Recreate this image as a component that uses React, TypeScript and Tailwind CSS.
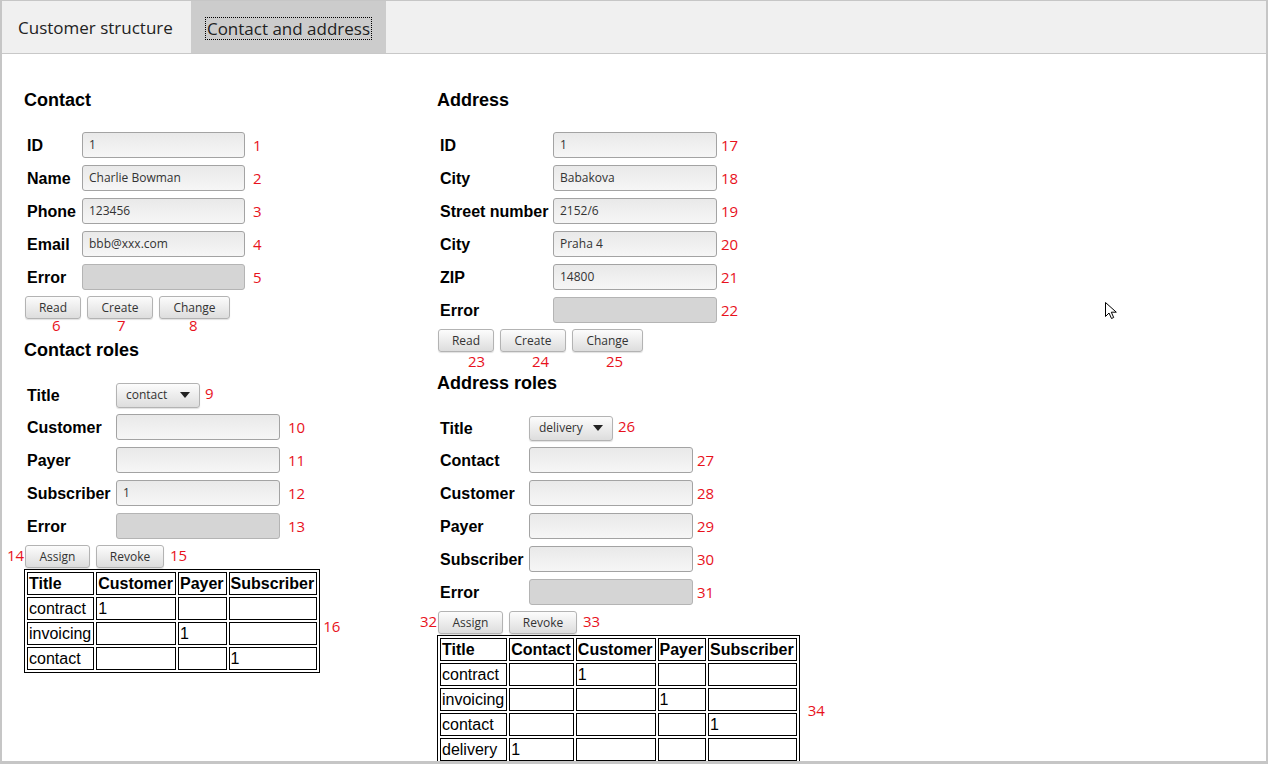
import React from 'react';

const label = "font-['Liberation_Sans',Arial,sans-serif] font-bold text-[16px] text-black";
const num = "font-['Open_Sans',sans-serif] text-[15px] leading-[16px] text-[#e8121c]";
const inputBox =
  "h-[26px] rounded-[3px] border border-[#a3a3a3] bg-linear-to-b from-[#e9e9e9] to-[#f6f6f6] pl-[6px] flex items-center font-['Open_Sans',sans-serif] text-[12px] text-[#333]";
const errorBox = 'h-[26px] rounded-[3px] border border-[#b4b4b4] bg-[#d5d5d5]';
const btn =
  "h-[23px] rounded-[3px] border border-[#b3b3b3] bg-linear-to-b from-[#fcfcfc] to-[#dddddd] shadow-[0_1px_1px_rgba(0,0,0,0.12)] font-['Open_Sans',sans-serif] text-[12px] text-[#333] flex items-center justify-center";

interface Field {
  name: string;
  value?: string;
  n: string;
  error?: boolean;
}

const FieldRow: React.FC<{ f: Field; labelW: number; inputW: number; gap: number }> = ({ f, labelW, inputW, gap }) => (
  <div className="flex items-center h-[26px]">
    <div className={`${label} pl-[3px] shrink-0 mt-[2px]`} style={{ width: labelW }}>
      {f.name}
    </div>
    <div className={f.error ? errorBox : inputBox} style={{ width: inputW }}>
      {f.value}
    </div>
    <span className={num} style={{ marginLeft: gap }}>
      {f.n}
    </span>
  </div>
);

const Select: React.FC<{ value: string; n: string; labelW: number }> = ({ value, n, labelW }) => (
  <div className="flex items-center h-[24px]">
    <div className={`${label} pl-[3px] shrink-0 mt-[2px]`} style={{ width: labelW }}>
      Title
    </div>
    <div className={`${btn} !h-[25px] w-[84px] !justify-between pl-[9px] pr-[9px]`}>
      <span>{value}</span>
      <svg width="10" height="6" viewBox="0 0 10 6">
        <path d="M0 0h10L5 6z" fill="#222" />
      </svg>
    </div>
    <span className={`${num} ml-[5px] -mt-[5px]`}>{n}</span>
  </div>
);

const ActionButtons: React.FC<{ items: [string, number, string, number][]; numTop: number }> = ({ items, numTop }) => (
  <div className="flex mt-[6px] gap-[6px] pl-[1px]">
    {items.map(([t, w, n, off]) => (
      <div key={t} className="flex flex-col items-start">
        <div className={btn} style={{ width: w }}>
          {t}
        </div>
        <span className={num} style={{ marginLeft: off, marginTop: numTop }}>
          {n}
        </span>
      </div>
    ))}
  </div>
);

const cell = "border border-black pl-[1px] pr-[2px] h-[23px] leading-[19px] text-left align-middle";

const RolesTable: React.FC<{ cols: string[]; rows: string[][] }> = ({ cols, rows }) => (
  <table className="border border-black border-separate border-spacing-[2px] font-['Liberation_Sans',Arial,sans-serif] text-[16px] text-black">
    <thead>
      <tr>
        {cols.map((c) => (
          <th key={c} className={`${cell} font-bold`}>
            {c}
          </th>
        ))}
      </tr>
    </thead>
    <tbody>
      {rows.map((r, i) => (
        <tr key={i}>
          {r.map((v, j) => (
            <td key={j} className={cell}>
              {v}
            </td>
          ))}
        </tr>
      ))}
    </tbody>
  </table>
);

const heading = "font-['Liberation_Sans',Arial,sans-serif] font-bold text-[18px] leading-[21px] text-black";

export default function App() {
  const contact: Field[] = [
    { name: 'ID', value: '1', n: '1' },
    { name: 'Name', value: 'Charlie Bowman', n: '2' },
    { name: 'Phone', value: '123456', n: '3' },
    { name: 'Email', value: 'bbb@xxx.com', n: '4' },
    { name: 'Error', n: '5', error: true },
  ];
  const contactRoles: Field[] = [
    { name: 'Customer', n: '10' },
    { name: 'Payer', n: '11' },
    { name: 'Subscriber', value: '1', n: '12' },
    { name: 'Error', n: '13', error: true },
  ];
  const address: Field[] = [
    { name: 'ID', value: '1', n: '17' },
    { name: 'City', value: 'Babakova', n: '18' },
    { name: 'Street number', value: '2152/6', n: '19' },
    { name: 'City', value: 'Praha 4', n: '20' },
    { name: 'ZIP', value: '14800', n: '21' },
    { name: 'Error', n: '22', error: true },
  ];
  const addressRoles: Field[] = [
    { name: 'Contact', n: '27' },
    { name: 'Customer', n: '28' },
    { name: 'Payer', n: '29' },
    { name: 'Subscriber', n: '30' },
    { name: 'Error', n: '31', error: true },
  ];

  return (
    <div className="relative w-[1268px] h-[764px] overflow-hidden bg-white border-l-2 border-r-2 border-t border-b-[3px] border-[#c6c6c6]">
      {/* tab bar */}
      <div className="flex h-[53px] bg-[#f0f0f0] border-b border-[#c8c8c8] font-['Open_Sans',sans-serif] text-[17px] text-[#222]">
        <div className="w-[189px] flex items-center pl-[16px] pt-[2px]">Customer structure</div>
        <div className="w-[195px] flex items-center justify-center bg-[#cccccc] pt-[2px]">
          <span className="border border-dotted border-black px-[1px] leading-[21px]">Contact and address</span>
        </div>
      </div>

      <div className="flex pl-[22px] pt-[36px]">
        {/* contact column */}
        <div className="w-[413px] shrink-0">
          <h2 className={heading}>Contact</h2>
          <div className="mt-[21px] flex flex-col gap-[7px]">
            {contact.map((f) => (
              <FieldRow key={f.n} f={f} labelW={58} inputW={163} gap={8} />
            ))}
          </div>
          <ActionButtons
            numTop={-2}
            items={[['Read', 56, '6', 27], ['Create', 66, '7', 30], ['Change', 71, '8', 30]]}
          />
          <h2 className={`${heading} mt-[7px]`}>Contact roles</h2>
          <div className="mt-[22px] flex flex-col gap-[7px]">
            <Select value="contact" n="9" labelW={92} />
            {contactRoles.map((f) => (
              <FieldRow key={f.n} f={f} labelW={92} inputW={164} gap={8} />
            ))}
          </div>
          <div className="flex items-center mt-[6px] -ml-[17px] gap-[6px]">
            <span className={`${num} w-[16px] -mt-[4px]`}>14</span>
            <div className={`${btn} w-[65px] -ml-[4px]`}>Assign</div>
            <div className={`${btn} w-[68px]`}>Revoke</div>
            <span className={`${num} -mt-[4px]`}>15</span>
          </div>
          <div className="flex items-center mt-[1px]">
            <RolesTable
              cols={['Title', 'Customer', 'Payer', 'Subscriber']}
              rows={[
                ['contract', '1', '', ''],
                ['invoicing', '', '1', ''],
                ['contact', '', '', '1'],
              ]}
            />
            <span className={`${num} ml-[3px] mt-[10px]`}>16</span>
          </div>
        </div>

        {/* address column */}
        <div className="shrink-0">
          <h2 className={heading}>Address</h2>
          <div className="mt-[21px] flex flex-col gap-[7px]">
            {address.map((f) => (
              <FieldRow key={f.n} f={f} labelW={116} inputW={164} gap={4} />
            ))}
          </div>
          <ActionButtons
            numTop={1}
            items={[['Read', 56, '23', 30], ['Create', 66, '24', 32], ['Change', 71, '25', 34]]}
          />
          <h2 className={`${heading} mt-[4px]`}>Address roles</h2>
          <div className="mt-[22px] flex flex-col gap-[7px]">
            <Select value="delivery" n="26" labelW={92} />
            {addressRoles.map((f) => (
              <FieldRow key={f.n} f={f} labelW={92} inputW={164} gap={4} />
            ))}
          </div>
          <div className="flex items-center mt-[6px] -ml-[17px] gap-[6px]">
            <span className={`${num} w-[16px] -mt-[4px]`}>32</span>
            <div className={`${btn} w-[65px] -ml-[4px]`}>Assign</div>
            <div className={`${btn} w-[68px]`}>Revoke</div>
            <span className={`${num} -mt-[4px]`}>33</span>
          </div>
          <div className="flex items-center mt-[1px]">
            <RolesTable
              cols={['Title', 'Contact', 'Customer', 'Payer', 'Subscriber']}
              rows={[
                ['contract', '', '1', '', ''],
                ['invoicing', '', '', '1', ''],
                ['contact', '', '', '', '1'],
                ['delivery', '1', '', '', ''],
              ]}
            />
            <span className={`${num} ml-[8px] mt-[20px]`}>34</span>
          </div>
        </div>
      </div>

      {/* mouse pointer */}
      <svg className="absolute left-[1102px] top-[300px]" width="14" height="20" viewBox="0 0 14 20">
        <path d="M1.5 1.5v14l3.5-3.5 2.5 5.5 2.2-1-2.4-5.3h5z" fill="#fff" stroke="#000" strokeWidth="1" strokeLinejoin="miter" />
      </svg>
    </div>
  );
}
